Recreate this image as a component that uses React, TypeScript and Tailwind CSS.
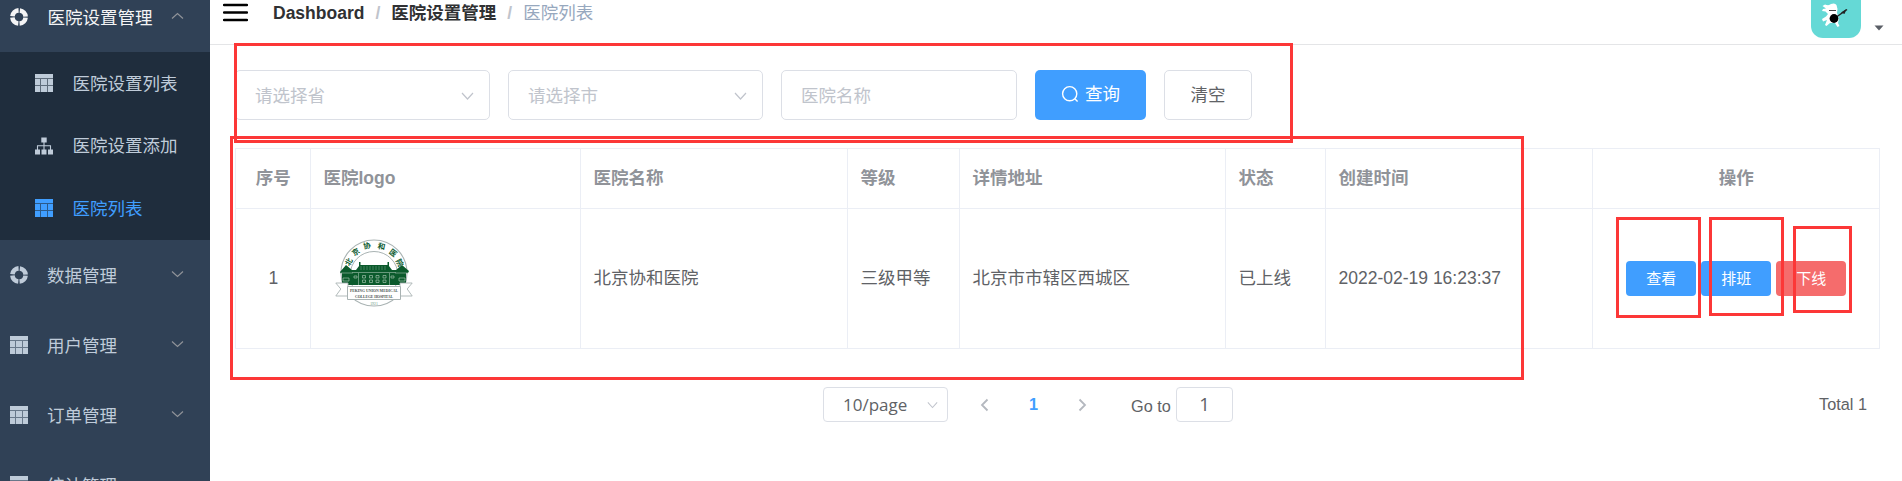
import React from "react";

const FONT = "font-['Liberation_Sans','Noto_Sans_CJK_SC',sans-serif]";

function ComponentIcon() {
  return (
    <svg width="18" height="18" viewBox="0 0 18 18" className="shrink-0">
      <circle cx="9" cy="9" r="6.6" fill="none" stroke="currentColor" strokeWidth="4.6" strokeDasharray="9.07 1.3" strokeDashoffset="-0.65" />
    </svg>
  );
}

function TableIcon() {
  return (
    <svg width="18" height="18" viewBox="0 0 18 18" className="shrink-0" fill="currentColor">
      <path d="M0 0h18v4H0zM0 5h5v6H0zM6 5h6v6H6zM13 5h5v6h-5zM0 12h5v6H0zM6 12h6v6H6zM13 12h5v6h-5z" />
      <path d="M0 0h18v18H0z" opacity="0.4" />
    </svg>
  );
}

function TreeIcon() {
  return (
    <svg width="18" height="18" viewBox="0 0 18 18" className="shrink-0" fill="currentColor">
      <path d="M6.3 0.5h5.4v5H6.3zM0 12.5h5v5H0zM6.5 12.5h5v5h-5zM13 12.5h5v5h-5z" />
      <path d="M9 5v8M2.5 13V8.8h13V13" fill="none" stroke="currentColor" strokeWidth="1.1" />
    </svg>
  );
}

function Chevron({ className, d = "M1 1.5l5.5 5 5.5-5" }: { className?: string; d?: string }) {
  return (
    <svg width="13" height="8" viewBox="0 0 13 8" className={className} fill="none" stroke="currentColor" strokeWidth="1.2">
      <path d={d} />
    </svg>
  );
}

function MenuTitle({ icon, label, open }: { icon: React.ReactNode; label: string; open?: boolean }) {
  return (
    <div className={`flex h-[70px] shrink-0 items-center pl-[10px] pr-[26px] ${open ? "text-[#f4f4f5]" : "text-[#bfcbd9]"}`}>
      {icon}
      <span className={open ? "ml-[19.5px] pt-[3px]" : "ml-[19px] pt-[3px]"}>{label}</span>
      <Chevron className="mb-[3px] ml-auto text-[#909399]" d={open ? "M1 6.5l5.5-5 5.5 5" : undefined} />
    </div>
  );
}

function SubItem({ icon, label, active }: { icon: React.ReactNode; label: string; active?: boolean }) {
  return (
    <div className={`flex h-[62.5px] items-center pl-[35px] ${active ? "text-[#409eff]" : "text-[#bfcbd9]"}`}>
      {icon}
      <span className="ml-[19.5px] pt-[2px]">{label}</span>
    </div>
  );
}

function Sidebar() {
  return (
    <aside className="h-[481px] w-[210px] shrink-0 overflow-hidden bg-[#304156]">
      <div className="-mt-[18px] flex flex-col">
        <MenuTitle icon={<ComponentIcon />} label="医院设置管理" open />
        <div className="h-[188px] shrink-0 bg-[#1f2d3d]">
          <SubItem icon={<TableIcon />} label="医院设置列表" />
          <SubItem icon={<TreeIcon />} label="医院设置添加" />
          <SubItem icon={<TableIcon />} label="医院列表" active />
        </div>
        <MenuTitle icon={<ComponentIcon />} label="数据管理" />
        <MenuTitle icon={<TableIcon />} label="用户管理" />
        <MenuTitle icon={<TableIcon />} label="订单管理" />
        <MenuTitle icon={<TableIcon />} label="统计管理" />
      </div>
    </aside>
  );
}

function Avatar() {
  return (
    <svg width="50" height="38" viewBox="0 0 50 38">
      <path d="M0 0h50v26a12 12 0 0 1-12 12H12A12 12 0 0 1 0 26z" fill="#65d9d6" />
      <path d="M14 4.5Q18 6 20 4q4-1.5 5.5 1Q27 8 26 13l2 6-1 4 1.5 3-2 1-2.5-4-5 0-3.5 3-1.5-1 2-5-4 1.5-1-2.5 4-2.5 2-2.5-2.5-2.5-3.5-.5 1-2 3-.5-3.5-2.5z" fill="#fff" />
      <path d="M18 10.5h7" stroke="#444" strokeWidth="1" />
      <path d="M24 18L36 9.5" stroke="#222" strokeWidth="1.5" />
      <path d="M30 12.5l5.5-3.5-2 5z" fill="#222" />
      <circle cx="23" cy="18.5" r="4.4" fill="#000" />
    </svg>
  );
}

function Navbar() {
  return (
    <header className="flex h-[45px] items-start border-b border-[#e4e5e7] pl-[13px] pr-[18px]">
      <svg width="25" height="20" viewBox="0 0 25 20" className="mt-[3px]">
        <path d="M1 2h23M1 9.5h23M1 17h23" stroke="#000" strokeWidth="2.4" strokeLinecap="round" />
      </svg>
      <nav className="ml-[25px] flex h-[27px] items-center">
        <b className="text-[#303133]">Dashboard</b>
        <b className="mx-[11px] text-[#c0c4cc]">/</b>
        <b className="text-[#303133]">医院设置管理</b>
        <b className="mx-[11px] text-[#c0c4cc]">/</b>
        <span className="text-[#97a8be]">医院列表</span>
      </nav>
      <div className="ml-auto flex">
        <Avatar />
        <svg width="10" height="6" viewBox="0 0 10 6" className="ml-[13px] mt-[25px]">
          <path d="M0.5 0.5h9L5 5.5z" fill="#5a5e66" />
        </svg>
      </div>
    </header>
  );
}

function Select({ placeholder }: { placeholder: string }) {
  return (
    <div className="mr-[18px] flex h-[50px] w-[255px] items-center justify-between rounded-[5px] border border-[#dcdfe6] pl-[19px] pr-[15px] text-[#c0c4cc]">
      <span className="pt-[3px]">{placeholder}</span>
      <Chevron className="mt-px" d="M1 1l5.5 6L12 1" />
    </div>
  );
}

function Filters() {
  return (
    <div className="flex pt-[25px]">
      <Select placeholder="请选择省" />
      <Select placeholder="请选择市" />
      <div className="flex h-[50px] w-[236px] items-center rounded-[5px] border border-[#dcdfe6] pl-[19px] pt-[3px] text-[#c0c4cc]">医院名称</div>
      <button className="ml-[18px] flex h-[50px] w-[111px] items-center justify-center gap-[6px] rounded-[5px] bg-[#409eff] text-white">
        <svg width="18" height="18" viewBox="0 0 18 18" className="-mt-[2px]" fill="none" stroke="currentColor" strokeWidth="1.4">
          <circle cx="8.7" cy="8.7" r="7.1" />
          <path d="M13.8 13.8l2.8 2.8" />
        </svg>
        查询
      </button>
      <button className="ml-[18px] flex h-[50px] w-[88px] items-center justify-center rounded-[5px] border border-[#dcdfe6] pt-px text-[#606266]">清空</button>
    </div>
  );
}

function HospitalLogo() {
  const chars: [string, number, number, number][] = [
    ["北", 14, 23, -60],
    ["京", 21, 13, -35],
    ["协", 32, 7, -10],
    ["和", 46.5, 7.5, 12],
    ["医", 58, 14, 38],
    ["院", 64.5, 24, 62],
  ];
  return (
    <svg width="78" height="70" viewBox="0 0 78 70">
      <circle cx="39" cy="34" r="33" fill="#fff" stroke="#a9b3b3" strokeWidth="1.1" />
      <circle cx="39" cy="36.5" r="24" fill="#fff" stroke="#a9b3b3" strokeWidth="1" />
      {chars.map(([c, x, y, r]) => (
        <text key={c} x={x} y={y} transform={`rotate(${r} ${x} ${y})`} textAnchor="middle" dominantBaseline="central" fontSize="7.5" fontWeight="700" fill="#0d5c31">
          {c}
        </text>
      ))}
      <path d="M24 23h1.5v3h27v-3H54v4l3 4h4l6-5 7 6-1 2h-2v12H7V34H5v-1l6-7 6 5h4l3-4z" fill="#0b5a2c" />
      <path d="M26 27v4M29 27v4M32 27v4M35 27v4M38 27v4M41 27v4M44 27v4M47 27v4M50 27v4" stroke="#6d9c80" strokeWidth="0.6" />
      <path d="M5 34h13M60 34h13M17 33.5h44M23.5 34v12M54.5 34v12" stroke="#8fb39d" strokeWidth="0.7" />
      <path d="M27.5 36.5h3v2.5h-3zM34.5 36.5h3v2.5h-3zM41 36.5h3v2.5h-3zM48 36.5h3v2.5h-3zM27.5 41h3v2.5h-3zM34.5 41h3v2.5h-3zM41 41h3v2.5h-3zM48 41h3v2.5h-3zM19 37h3v2h-3zM56 37h3v2h-3zM8 39h6v3H8zM64 39h6v3h-6z" fill="none" stroke="#b5cfbe" strokeWidth="0.6" />
      <path d="M13 44H0.8l5 6-5 7H13zM65 44h12.2l-5 6 5 7H65z" fill="#fff" stroke="#a9b3b3" strokeWidth="0.9" />
      <path d="M12.5 47.5h53v13h-53z" fill="#fff" stroke="#a9b3b3" strokeWidth="1" />
      <g className="font-['Liberation_Serif',serif]" fontWeight="700" textAnchor="middle" fill="#4a5450" fontSize="3.8">
        <text x="39" y="52.5" textLength="48">PEKING UNION MEDICAL</text>
        <text x="39" y="58.8" textLength="38">COLLEGE HOSPITAL</text>
        <text x="39" y="65.5" fill="#5f9878" fontWeight="400">1921</text>
      </g>
    </svg>
  );
}

const COLS = "grid grid-cols-[75px_270px_267px_112px_266px_100px_267px_287px]";
const CELL = "flex items-center border-r border-b border-[#ebeef5] pl-[12.5px] pr-[12px]";

function ActionButton({ label, danger }: { label: string; danger?: boolean }) {
  return (
    <button className={`flex h-[35px] w-[70px] items-center justify-center rounded-[4px] text-[15px] text-white ${danger ? "bg-[#f56c6c]" : "bg-[#409eff]"}`}>
      {label}
    </button>
  );
}

function HospitalTable() {
  const heads = ["序号", "医院logo", "医院名称", "等级", "详情地址", "状态", "创建时间", "操作"];
  return (
    <div className="mt-[28px] w-[1645px] border-l border-t border-[#ebeef5]">
      <div className={`${COLS} h-[60px] font-bold text-[#909399]`}>
        {heads.map((h, i) => (
          <div key={h} className={`${CELL} ${i === 0 || i === 7 ? "justify-center" : ""}`}>{h}</div>
        ))}
      </div>
      <div className={`${COLS} h-[140px] text-[#606266]`}>
        <div className={`${CELL} justify-center`}>1</div>
        <div className="flex items-center border-b border-r border-[#ebeef5] pb-[9px] pl-[24px]"><HospitalLogo /></div>
        <div className={CELL}>北京协和医院</div>
        <div className={CELL}>三级甲等</div>
        <div className={CELL}>北京市市辖区西城区</div>
        <div className={CELL}>已上线</div>
        <div className={CELL}>2022-02-19 16:23:37</div>
        <div className={`${CELL} justify-center gap-[5px]`}>
          <ActionButton label="查看" />
          <ActionButton label="排班" />
          <ActionButton label="下线" danger />
        </div>
      </div>
    </div>
  );
}

function Pagination() {
  return (
    <div className="mt-[38px] flex h-[35px] items-center pl-[613px] pr-[35px] text-[16.25px] text-[#606266]">
      <div className="flex h-[35px] w-[125px] items-center justify-between rounded-[4px] border border-[#dcdfe6] pl-[19px] pr-[9px] font-['Open_Sans',sans-serif] text-[17px]">
        <span>10/page</span>
        <Chevron className="w-[11px] text-[#c0c4cc]" d="M1 1l5.5 6L12 1" />
      </div>
      <svg width="9" height="14" viewBox="0 0 9 14" className="ml-[32px]" fill="none" stroke="#b4b8bf" strokeWidth="1.8"><path d="M7.5 1.5L2 7l5.5 5.5" /></svg>
      <b className="mx-[36px] w-[17px] text-center text-[#409eff]">1</b>
      <svg width="9" height="14" viewBox="0 0 9 14" fill="none" stroke="#b4b8bf" strokeWidth="1.8"><path d="M1.5 1.5L7 7l-5.5 5.5" /></svg>
      <div className="ml-[44px] flex w-[102px] items-center justify-between">
        <span className="mt-[3px]">Go to</span>
        <div className="flex h-[35px] w-[57px] items-center justify-center rounded-[4px] border border-[#dcdfe6] font-['Open_Sans',sans-serif] text-[18.5px]">1</div>
      </div>
      <span className="ml-auto">Total 1</span>
    </div>
  );
}

function Highlights() {
  return (
    <>
      <div className="absolute left-[234px] top-[43px] h-[100px] w-[1059px] border-3 border-[#fc3737]" />
      <div className="absolute left-[230px] top-[136px] h-[244px] w-[1294px] border-3 border-[#fc3737]" />
      <div className="absolute left-[1616px] top-[217px] h-[101px] w-[85px] border-3 border-[#fc3737]" />
      <div className="absolute left-[1709px] top-[217px] h-[99px] w-[75px] border-3 border-[#fc3737]" />
      <div className="absolute left-[1793px] top-[226px] h-[87px] w-[59px] border-3 border-[#fc3737]" />
    </>
  );
}

export default function App() {
  return (
    <div className={`relative flex h-[481px] w-[1902px] overflow-hidden bg-white text-[17.5px] leading-none ${FONT}`}>
      <Sidebar />
      <main className="flex-1">
        <Navbar />
        <div className="pl-[25px]">
          <Filters />
          <HospitalTable />
        </div>
        <Pagination />
      </main>
      <Highlights />
    </div>
  );
}
